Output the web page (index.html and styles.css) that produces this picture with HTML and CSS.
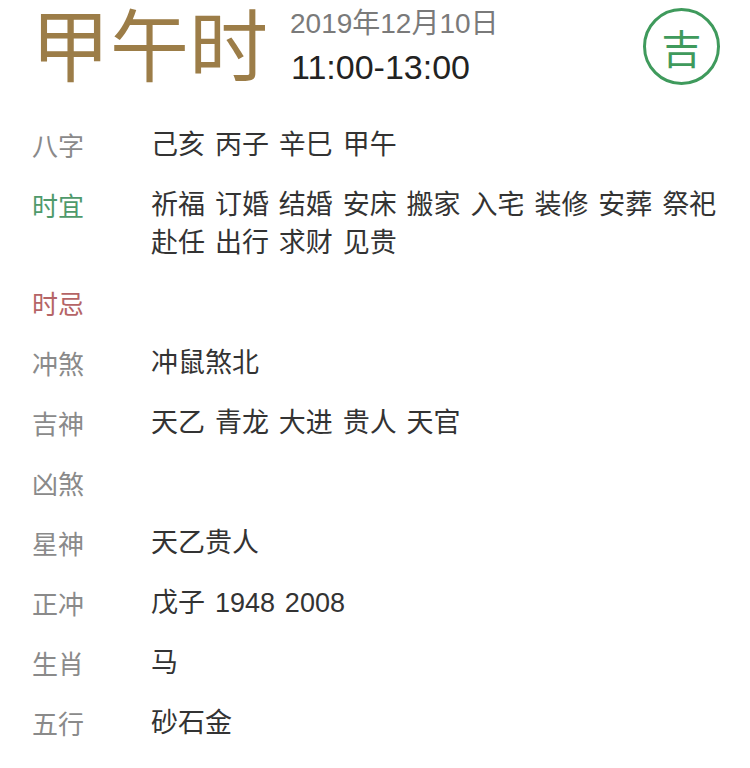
FILE: index.html
```html
<!DOCTYPE html>
<html lang="zh-CN">
<head>
<meta charset="utf-8">
<link rel="stylesheet" href="styles.css">
</head>
<body>
<div class="page">
  <header class="head">
    <div class="title">甲午时</div>
    <div class="when">
      <div class="date">2019年12月10日</div>
      <div class="time">11:00-13:00</div>
    </div>
    <div class="badge">吉</div>
  </header>
  <dl class="rows">
    <dt class="label">八字</dt><dd class="value">己亥 丙子 辛巳 甲午</dd>
    <dt class="label good">时宜</dt><dd class="value">祈福 订婚 结婚 安床 搬家 入宅 装修 安葬 祭祀<br>赴任 出行 求财 见贵</dd>
    <dt class="label bad">时忌</dt><dd class="value"></dd>
    <dt class="label">冲煞</dt><dd class="value">冲鼠煞北</dd>
    <dt class="label">吉神</dt><dd class="value">天乙 青龙 大进 贵人 天官</dd>
    <dt class="label">凶煞</dt><dd class="value"></dd>
    <dt class="label">星神</dt><dd class="value">天乙贵人</dd>
    <dt class="label">正冲</dt><dd class="value">戊子 1948 2008</dd>
    <dt class="label">生肖</dt><dd class="value">马</dd>
    <dt class="label">五行</dt><dd class="value">砂石金</dd>
  </dl>
</div>
</body>
</html>
```
FILE: styles.css
```css
html, body {
  margin: 0;
  padding: 0;
  background: #ffffff;
}
body {
  font-family: "Noto Sans CJK SC", "Noto Sans", sans-serif;
  width: 750px;
  height: 768px;
  overflow: hidden;
}
.page {
  padding: 0 32px;
}
.head {
  display: flex;
  align-items: flex-start;
  padding-top: 2px;
  height: 100px;
  box-sizing: border-box;
}
.title {
  font-size: 79px;
  line-height: 80px;
  color: #9c7d48;
  margin-left: -1px;
}
.when {
  margin-left: 22px;
  display: flex;
  flex-direction: column;
}
.date {
  font-family: "Liberation Sans", "Noto Sans CJK SC", sans-serif;
  font-size: 28px;
  line-height: 32px;
  color: #7a7a7a;
  margin-top: 6px;
}
.time {
  font-family: "Liberation Sans", "Noto Sans CJK SC", sans-serif;
  font-size: 34px;
  line-height: 38px;
  color: #222222;
  margin-top: 8px;
  margin-left: 1px;
}
.badge {
  margin-left: auto;
  margin-right: -2px;
  margin-top: 6px;
  width: 71px;
  height: 71px;
  border: 3px solid #3f9a5c;
  border-radius: 50%;
  display: flex;
  align-items: center;
  justify-content: center;
  font-size: 40px;
  color: #3f9a5c;
  line-height: 1;
}
.rows {
  display: grid;
  grid-template-columns: 119px 1fr;
  row-gap: 22px;
  margin: 26px 0 0 0;
}
.label, .value {
  margin: 0;
  font-size: 26px;
  line-height: 38px;
  min-height: 38px;
}
.label {
  color: #8a8a8a;
}
.label.good {
  color: #4f9a6b;
}
.label.bad {
  color: #b56466;
}
.value {
  font-family: "Liberation Sans", "Noto Sans CJK SC", sans-serif;
  font-size: 27px;
  color: #333333;
  word-spacing: 2.4px;
}
```
